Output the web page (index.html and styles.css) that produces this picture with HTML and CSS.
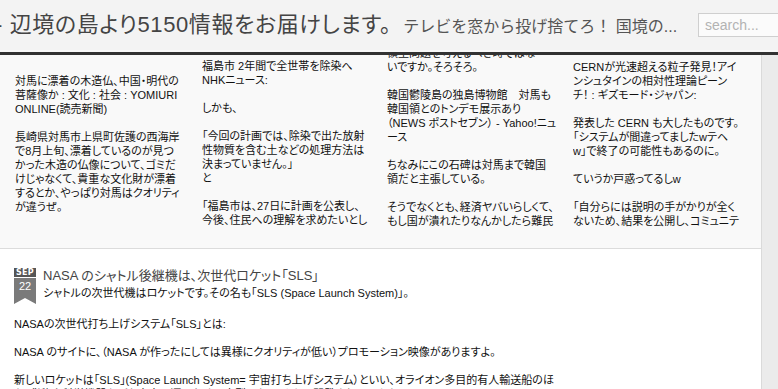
FILE: index.html
```html
<!DOCTYPE html>
<html lang="ja">
<head>
<meta charset="utf-8">
<title>辺境の島より5150情報をお届けします。</title>
<link rel="stylesheet" href="styles.css">
</head>
<body>
<header class="topbar">
  <div class="site-title"><span class="name">- 辺境の島より5150情報をお届けします。</span><span class="tagline">テレビを窓から投げ捨てろ！ 国境の...</span></div>
  <input class="search" type="text" placeholder="search...">
</header>
<div class="page">
  <main class="content">
    <section class="featured">
      <article class="tile tile-1">
        <p class="first">対馬に漂着の木造仏、中国・明代の<br>菩薩像か : 文化 : 社会 : YOMIURI<br>ONLINE(読売新聞)</p>
        <p>長崎県対馬市上県町佐護の西海岸<br>で8月上旬、漂着しているのが見つ<br>かった木造の仏像について、ゴミだ<br>けじゃなくて、貴重な文化財が漂着<br>するとか、やっぱり対馬はクオリティ<br>が違うぜ。</p>
      </article>
      <article class="tile tile-2">
        <p>福島市 2年間で全世帯を除染へ<br>NHKニュース:</p>
        <p>しかも、</p>
        <p>「今回の計画では、除染で出た放射<br>性物質を含む土などの処理方法は<br>決まっていません。」<br>と</p>
        <p>「福島市は、27日に計画を公表し、<br>今後、住民への理解を求めたいとし<br>ています。」</p>
      </article>
      <article class="tile tile-3">
        <p class="first">領土問題を考えるべき時ではな<br>いですか。そろそろ。</p>
        <p>韓国鬱陵島の独島博物館　対馬も<br>韓国領とのトンデモ展示あり<br>（NEWS ポストセブン） - Yahoo!ニュ<br>ース</p>
        <p>ちなみにこの石碑は対馬まで韓国<br>領だと主張している。</p>
        <p>そうでなくとも、経済ヤバいらしくて、<br>もし国が潰れたりなんかしたら難民<br>が押し寄せてくるのでは。</p>
      </article>
      <article class="tile tile-4">
        <p>CERNが光速超える粒子発見！アイ<br>ンシュタインの相対性理論ピーン<br>チ！ : ギズモード・ジャパン:</p>
        <p>発表した CERN も大したものです。<br>「システムが間違ってましたwテヘ<br>w」で終了の可能性もあるのに。</p>
        <p>ていうか戸惑ってるしw</p>
        <p>「自分らには説明の手がかりが全く<br>ないため、結果を公開し、コミュニテ<br>ィに検証してほしい」</p>
      </article>
    </section>
    <article class="post">
      <div class="post-head">
        <div class="date"><span class="month">SEP</span><span class="day">22</span></div>
        <div class="heading">
          <h2>NASA のシャトル後継機は、次世代ロケット「SLS」</h2>
          <p class="lead">シャトルの次世代機はロケットです。その名も「SLS (Space Launch System)」。</p>
        </div>
      </div>
      <div class="post-body">
        <p>NASAの次世代打ち上げシステム「SLS」とは:</p>
        <p>NASA のサイトに、（NASA が作ったにしては異様にクオリティが低い）プロモーション映像がありますよ。</p>
        <p>新しいロケットは「SLS」(Space Launch System= 宇宙打ち上げシステム）といい、オライオン多目的有人輸送船のほ<br>か、貨物や科学機器などを宇宙へ運ぶための大型ロケットとして開発されています。</p>
      </div>
    </article>
  </main>
  <div class="scrolltrack"></div>
</div>
</body>
</html>
```
FILE: styles.css
```css
html, body {
  margin: 0;
  padding: 0;
}

body {
  width: 778px;
  height: 389px;
  overflow: hidden;
  background: #fff;
  font-family: "Liberation Sans", "Noto Sans CJK JP", sans-serif;
  font-feature-settings: "palt" 1;
  color: #111;
}

.topbar {
  display: flex;
  align-items: center;
  height: 52px;
  background: #f3f3f3;
  border-bottom: 3px solid #333;
  box-shadow: inset 0 -2px 0 #f8f8f8;
  overflow: hidden;
}

.site-title {
  flex: none;
  width: 703px;
  margin-left: -5px;
  display: flex;
  align-items: baseline;
  white-space: nowrap;
  overflow: hidden;
  line-height: 30px;
  color: #444;
}

.name {
  font-size: 22px;
  letter-spacing: 0.6px;
}

.tagline {
  font-size: 16px;
  margin-left: 12px;
  color: #555;
  font-feature-settings: "palt" 0;
}

.search {
  flex: none;
  width: 110px;
  height: 24px;
  box-sizing: border-box;
  margin: 0 0 2px 0;
  padding: 0 6px;
  border: 1px solid #cfcfcf;
  background: #fbfbfb;
  font: 14px "Liberation Sans", sans-serif;
  color: #aaa;
}

.search::placeholder {
  color: #b3b3b3;
}

.page {
  display: flex;
  height: 334px;
}

.content {
  width: 761px;
  flex: none;
}

.scrolltrack {
  flex: 1;
  background: #ebebeb;
  border-left: 1px solid #dadada;
}

.featured {
  display: grid;
  grid-template-columns: 187px 185px 186px 186px;
  align-items: start;
  height: 194px;
  box-sizing: border-box;
  padding-left: 15px;
  background: #f9f9f9;
  border-bottom: 1px solid #dcdcdc;
  overflow: hidden;
}

.tile {
  height: 173px;
  box-sizing: border-box;
  padding-top: 5px;
  overflow: hidden;
  font-size: 11px;
  line-height: 14px;
  color: #111;
}

.tile p {
  margin: 0 0 14px;
  white-space: nowrap;
}

.tile-1 .first {
  margin-top: 14px;
}

.tile-2 {
  padding-top: 4px;
}

.tile-3 .first {
  margin-top: -14px;
}

.post {
  padding: 19px 14px 0;
}

.post-head {
  display: flex;
  gap: 7px;
}

.date {
  width: 22px;
  flex: none;
  display: flex;
  flex-direction: column;
}

.month {
  height: 9px;
  background: #555;
  color: #fff;
  font: bold 8px/9px "DejaVu Sans", sans-serif;
  text-align: center;
  letter-spacing: 0.3px;
}

.day {
  height: 26px;
  margin-top: 1px;
  padding-top: 1px;
  box-sizing: border-box;
  background: #7a7a7a;
  color: #fff;
  font-size: 11px;
  line-height: 14px;
  text-align: center;
  clip-path: polygon(0 0, 100% 0, 100% 100%, 50% calc(100% - 6px), 0 100%);
}

.heading h2 {
  margin: -1px 0 0;
  font-size: 13px;
  font-weight: normal;
  line-height: 18px;
  color: #444;
  white-space: nowrap;
}

.lead {
  margin: 0;
  font-size: 11px;
  line-height: 16px;
  color: #111;
  white-space: nowrap;
}

.post-body {
  margin-top: 13px;
  font-size: 11px;
  line-height: 14px;
  color: #111;
}

.post-body p {
  margin: 0 0 14px;
  white-space: nowrap;
}
```
